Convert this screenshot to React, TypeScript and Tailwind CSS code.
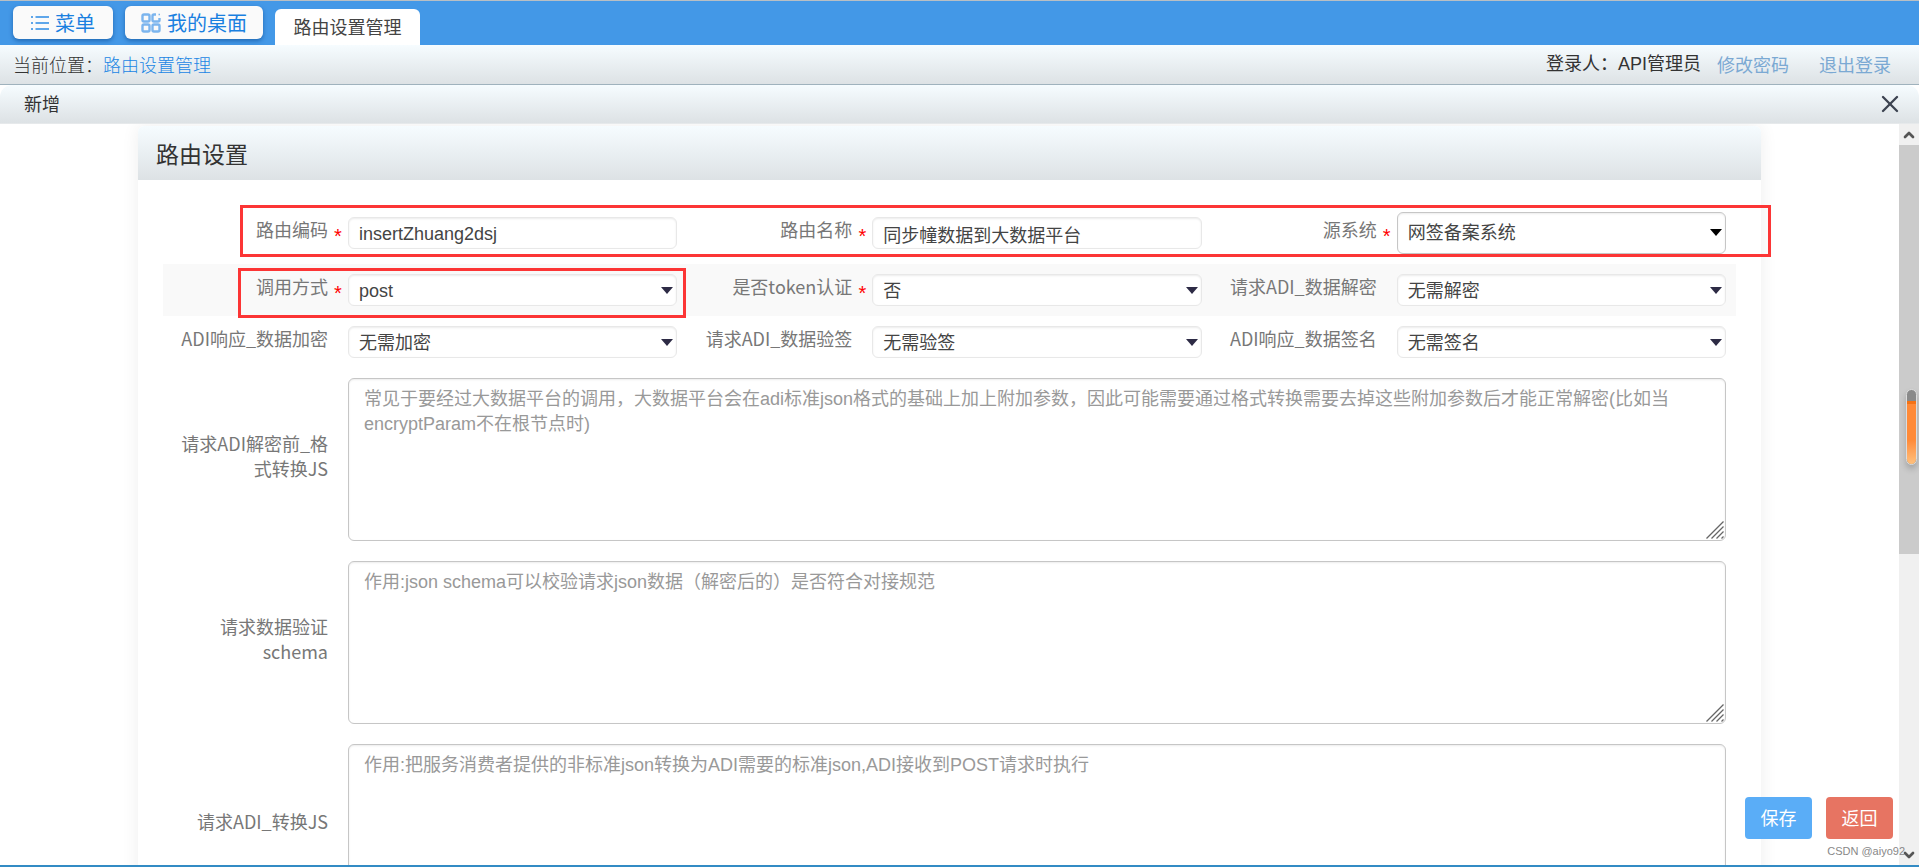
import { useState } from 'react'
import { ChevronDown, ChevronUp, X } from 'lucide-react'

type Field = {
  id: string
  label: string
  value: string
  required?: boolean
  kind: 'input' | 'select' | 'native'
  marked?: boolean
}

const rows: { shaded?: boolean; marked?: boolean; fields: Field[] }[] = [
  {
    marked: true,
    fields: [
      { id: 'routeCode', label: '路由编码', value: 'insertZhuang2dsj', required: true, kind: 'input' },
      { id: 'routeName', label: '路由名称', value: '同步幢数据到大数据平台', required: true, kind: 'input' },
      { id: 'sourceSystem', label: '源系统', value: '网签备案系统', required: true, kind: 'native' },
    ],
  },
  {
    shaded: true,
    fields: [
      { id: 'method', label: '调用方式', value: 'post', required: true, kind: 'select', marked: true },
      { id: 'tokenAuth', label: '是否token认证', value: '否', required: true, kind: 'select' },
      { id: 'requestDecrypt', label: '请求ADI_数据解密', value: '无需解密', kind: 'select' },
    ],
  },
  {
    fields: [
      { id: 'responseEncrypt', label: 'ADI响应_数据加密', value: '无需加密', kind: 'select' },
      { id: 'requestVerify', label: '请求ADI_数据验签', value: '无需验签', kind: 'select' },
      { id: 'responseSign', label: 'ADI响应_数据签名', value: '无需签名', kind: 'select' },
    ],
  },
]

const scripts = [
  {
    id: 'beforeDecrypt',
    label: '请求ADI解密前_格式转换JS',
    placeholder:
      '常见于要经过大数据平台的调用，大数据平台会在adi标准json格式的基础上加上附加参数，因此可能需要通过格式转换需要去掉这些附加参数后才能正常解密(比如当encryptParam不在根节点时)',
  },
  {
    id: 'schema',
    label: '请求数据验证schema',
    placeholder: '作用:json schema可以校验请求json数据（解密后的）是否符合对接规范',
  },
  {
    id: 'transform',
    label: '请求ADI_转换JS',
    placeholder: '作用:把服务消费者提供的非标准json转换为ADI需要的标准json,ADI接收到POST请求时执行',
  },
]

const ListIcon = () => (
  <svg width="18" height="16" viewBox="0 0 18 16" fill="none" stroke="#5ea6ea" strokeWidth="2">
    <path d="M4.5 2H18M4.5 8H18M4.5 14H18" />
    <path d="M0 2H2M0 8H2M0 14H2" />
  </svg>
)

const GridIcon = () => (
  <svg width="20" height="20" viewBox="0 0 20 20" fill="none" stroke="#7cb5ee" strokeWidth="2.4">
    <rect x="1.5" y="1.5" width="7" height="7" rx="1.5" />
    <path d="M15 1.5H13Q11.5 1.5 11.5 3V7Q11.5 8.5 13 8.5H17Q18.5 8.5 18.5 7V5" />
    <path d="M17.5 1.5H19" strokeWidth="1.5" />
    <rect x="1.5" y="11.5" width="7" height="7" rx="1.5" />
    <rect x="11.5" y="11.5" width="7" height="7" rx="1.5" />
  </svg>
)

const FieldControl = ({ field }: { field: Field }) => {
  const [value, setValue] = useState(field.value)
  const base =
    "w-full appearance-none rounded-md border bg-white text-lg leading-6 text-[#444] shadow-[inset_0_1px_2px_rgba(0,0,0,0.08)] outline-none font-['Liberation_Sans','Noto_Sans_CJK_SC',sans-serif]"

  if (field.kind === 'input') {
    return (
      <input
        id={field.id}
        value={value}
        onChange={(e) => setValue(e.target.value)}
        className={`${base} block h-8 border-[#e8e8e8] px-[10px] pt-[2px]`}
      />
    )
  }

  const native = field.kind === 'native'
  return (
    <div className="relative">
      <select
        id={field.id}
        value={value}
        onChange={(e) => setValue(e.target.value)}
        className={`${base} block pr-8 pl-[10px] ${native ? 'h-[42px] border-[#c6c6c6]' : 'h-8 border-[#e8e8e8] pt-[2px]'}`}
      >
        <option>{field.value}</option>
      </select>
      <svg
        width="12"
        height="7"
        viewBox="0 0 12 7"
        className={`pointer-events-none absolute right-1 ${native ? 'top-[17px] text-black' : 'top-[13px] text-[#2d2b45]'}`}
      >
        <path d="M0 0H12L6 7Z" fill="currentColor" />
      </svg>
    </div>
  )
}

const App = () => {
  return (
    <div className="relative flex h-screen flex-col overflow-hidden border-t border-b-2 border-t-[#b9bfc4] border-b-[#338bc4] bg-white font-['Noto_Sans_CJK_SC',sans-serif] text-lg leading-6 text-[#333]">
      {/* Tab bar */}
      <header className="flex h-11 shrink-0 items-end bg-[#4398e7] pl-[13px]">
        <div className="flex gap-3 pb-[6px] text-xl text-[#1a80e0]">
          <button className="flex h-[33px] w-[100px] items-center justify-center gap-[6px] rounded-md bg-[#fafafa] shadow-[0_2px_4px_rgba(0,60,130,0.5)]">
            <ListIcon />
            菜单
          </button>
          <button className="flex h-[33px] w-[138px] items-center justify-center gap-[6px] rounded-md bg-[#fafafa] shadow-[0_2px_4px_rgba(0,60,130,0.5)]">
            <GridIcon />
            我的桌面
          </button>
        </div>
        <button className="ml-3 h-9 w-[145px] rounded-t-md bg-white pb-[2px] text-[#444]">路由设置管理</button>
      </header>

      {/* Breadcrumb and account */}
      <div className="flex h-10 shrink-0 items-center justify-between border-b border-[#9fb2bd] bg-linear-to-b from-[#f6fcff] to-[#dde2e5] pr-7 pb-[2px] pl-[13px]">
        <div className="font-light">
          当前位置：
          <a href="#" className="text-[#1a86e4]">路由设置管理</a>
        </div>
        <div className="flex items-center">
          <span className="font-['Liberation_Sans','Noto_Sans_CJK_SC',sans-serif]">登录人：API管理员</span>
          <a href="#" className="ml-4 text-[#7ba9d3]">修改密码</a>
          <a href="#" className="ml-[30px] text-[#7ba9d3]">退出登录</a>
        </div>
      </div>

      {/* Dialog title */}
      <div className="flex h-[39px] shrink-0 items-center justify-between rounded-t-xl border-b border-[#e6e9eb] bg-linear-to-b from-[#f6fcff] to-[#dde2e5] pr-[15px] pl-6">
        <h1 className="pb-[3px]">新增</h1>
        <button aria-label="关闭">
          <X className="size-7 text-[#3c4350]" strokeWidth={2} />
        </button>
      </div>

      <div className="flex min-h-0 flex-1">
        <main className="min-w-0 flex-1 overflow-hidden px-[138px] pt-[2px]">
          <form className="rounded-t-md shadow-[0_0_18px_rgba(0,0,0,0.07)]">
            <h2 className="flex h-[54px] items-center rounded-t-md bg-linear-to-b from-[#f6fcff] to-[#dde2e5] pl-[18px] text-[23px]">
              路由设置
            </h2>
            <div className="px-[25px] pt-[22px] text-[#777]">
              {rows.map((row, i) => (
                <div key={i} className={`relative grid grid-cols-3 ${row.shaded ? 'bg-[#f9f9f9]' : ''}`}>
                  {row.fields.map((field) => (
                    <div key={field.id} className="relative flex items-center py-[10px] pr-[10px]">
                      <label htmlFor={field.id} className="w-[165px] shrink-0 pb-2 text-right">
                        {field.label}
                      </label>
                      <span className="w-5 shrink-0 pt-[6px] text-center font-['Liberation_Sans',sans-serif] text-xl leading-5 text-[#f00]">
                        {field.required ? '*' : ''}
                      </span>
                      <div className="min-w-0 flex-1">
                        <FieldControl field={field} />
                      </div>
                      {field.marked && (
                        <div className="pointer-events-none absolute top-1 right-px -bottom-[2px] left-[75px] border-3 border-[#fc3535]" />
                      )}
                    </div>
                  ))}
                  {row.marked && (
                    <div className="pointer-events-none absolute top-[3px] -right-[35px] bottom-[7px] left-[77px] border-3 border-[#fc3535]" />
                  )}
                </div>
              ))}

              {scripts.map((script) => (
                <div key={script.id} className="flex items-center gap-5 py-[10px] pr-[10px]">
                  <label htmlFor={script.id} className="w-[165px] shrink-0 pb-2 pl-4 text-right leading-[25px]">
                    {script.label}
                  </label>
                  <div className="relative min-w-0 flex-1">
                    <textarea
                      id={script.id}
                      placeholder={script.placeholder}
                      className="block h-[163px] w-full resize-none rounded-md border border-[#c6c6c6] bg-white px-[15px] py-2 leading-[25px] text-[#444] shadow-[inset_0_1px_2px_rgba(0,0,0,0.08)] outline-none placeholder:text-[#999] font-['Liberation_Sans','Noto_Sans_CJK_SC',sans-serif]"
                    />
                    <svg
                      width="18"
                      height="18"
                      viewBox="0 0 18 18"
                      fill="none"
                      stroke="#666"
                      className="pointer-events-none absolute right-[2px] bottom-[2px]"
                    >
                      <path d="M0.5 17.5L17.5 0.5M5.5 17.5L17.5 5.5M10.5 17.5L17.5 10.5M15.5 17.5L17.5 15.5" strokeWidth="1.3" />
                    </svg>
                  </div>
                </div>
              ))}
            </div>
          </form>
        </main>

        {/* Scroll track */}
        <div className="flex w-5 shrink-0 flex-col items-center bg-[#f0f0f0]">
          <div className="flex h-[21px] items-center">
            <ChevronUp className="size-4 text-[#555]" strokeWidth={4} />
          </div>
          <div className="h-[409px] w-full bg-[#cbcbcb]" />
          <ChevronDown className="mt-auto mb-[2px] size-4 text-[#555]" strokeWidth={4} />
        </div>
      </div>

      {/* Floating gauge over the scroll track */}
      <div className="absolute top-[388px] right-[2px] h-[76px] w-[11px] overflow-hidden rounded-full border border-[#ddd] bg-[#8a8a8a] pt-[11px] shadow-[0_4px_6px_rgba(0,0,0,0.2)]">
        <div className="h-full border-t-3 border-[#f47216] bg-linear-to-b from-[#ff8a38] from-60% to-[#ffc07c]" />
      </div>

      <div className="absolute right-[26px] bottom-[26px] flex gap-[14px] text-white">
        <button className="h-[42px] w-[67px] rounded bg-[#5aadf7] pb-[2px]">保存</button>
        <button className="h-[42px] w-[67px] rounded bg-[#e77462] pb-[2px]">返回</button>
      </div>
      <div className="absolute right-[14px] bottom-[6px] font-['Liberation_Sans',sans-serif] text-[11px] leading-4 text-[#888]">
        CSDN @aiyo92
      </div>
    </div>
  )
}

export default App
